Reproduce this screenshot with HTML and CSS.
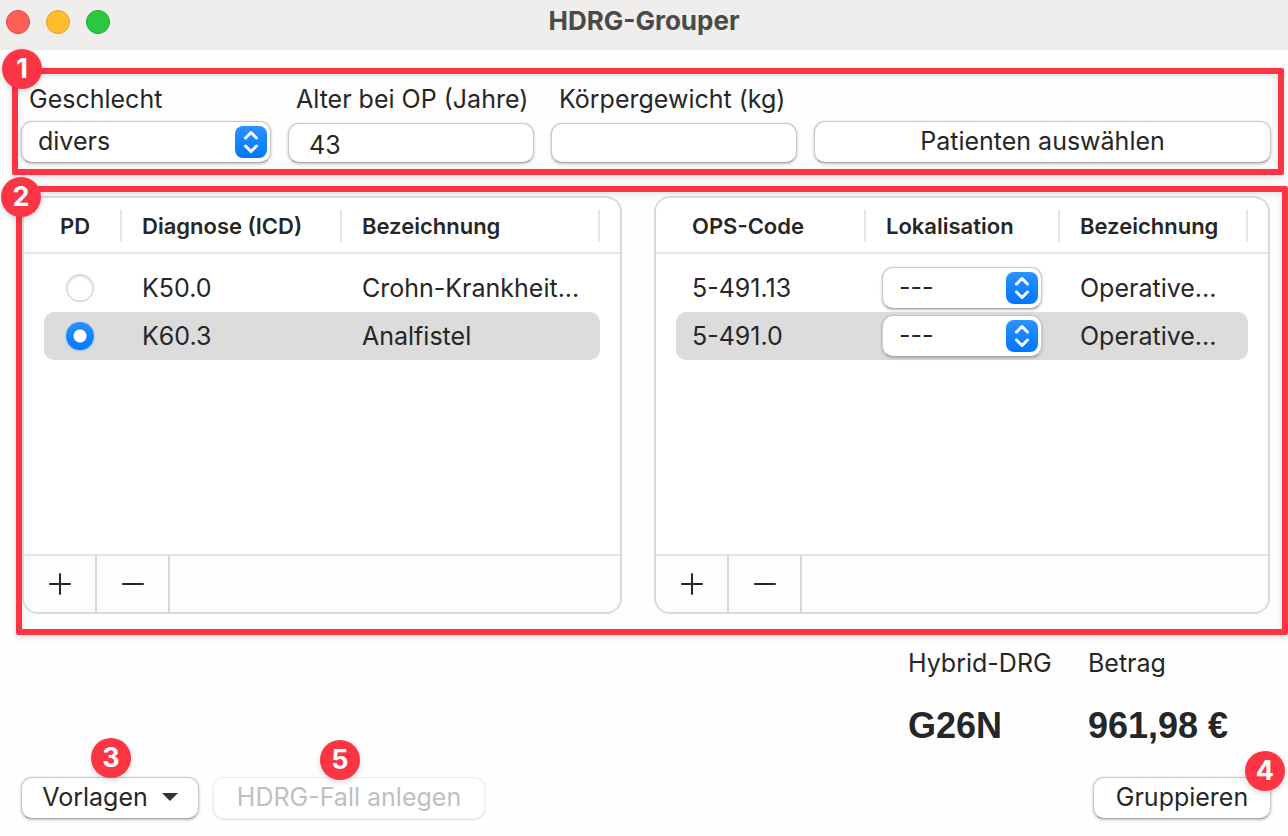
FILE: index.html
```html
<!DOCTYPE html>
<html lang="de">
<head>
    <meta charset="UTF-8">
    <meta name="viewport" content="width=device-width, initial-scale=1.0">
    <title>HDRG-Grouper</title>
    <link rel="stylesheet" href="styles.css">
</head>
<body>
    <svg class="symbols" aria-hidden="true">
        <defs>
            <linearGradient id="blue" x1="0" y1="0" x2="0" y2="1">
                <stop offset="0" stop-color="#2b91ff"/>
                <stop offset="1" stop-color="#0078ff"/>
            </linearGradient>
        </defs>
        <symbol id="updown" viewBox="0 0 32 32">
            <rect width="32" height="32" rx="8" fill="url(#blue)"/>
            <path d="M10.500 12 16 6.500 21.500 12M10.500 20 16 25.500 21.500 20" fill="none" stroke="#fff" stroke-width="3" stroke-linecap="round" stroke-linejoin="round"/>
        </symbol>
    </svg>

    <div class="window">
        <header class="titlebar">
            <div class="lights">
                <button class="light close" aria-label="Schließen"></button>
                <button class="light minimize" aria-label="Minimieren"></button>
                <button class="light maximize" aria-label="Maximieren"></button>
            </div>
            <h1>HDRG-Grouper</h1>
        </header>

        <section class="frame patient">
            <span class="badge on-corner">1</span>
            <div class="field">
                <label for="gender">Geschlecht</label>
                <div class="popup">
                    <select id="gender">
                        <option>divers</option>
                        <option>männlich</option>
                        <option>weiblich</option>
                    </select>
                    <svg class="arrows"><use href="#updown"/></svg>
                </div>
            </div>
            <div class="field">
                <label for="age">Alter bei OP (Jahre)</label>
                <input type="text" id="age" value="43">
            </div>
            <div class="field">
                <label for="weight">Körpergewicht (kg)</label>
                <input type="text" id="weight">
            </div>
            <button class="button">Patienten auswählen</button>
        </section>

        <section class="frame codes">
            <span class="badge below-corner">2</span>

            <div class="panel">
                <table class="diagnoses">
                    <thead>
                        <tr>
                            <th class="col-pd">PD</th>
                            <th class="col-icd">Diagnose (ICD)</th>
                            <th>Bezeichnung</th>
                        </tr>
                    </thead>
                    <tbody>
                        <tr>
                            <td><input type="radio" name="pd" aria-label="K50.0"></td>
                            <td>K50.0</td>
                            <td>Crohn-Krankheit...</td>
                        </tr>
                        <tr class="selected">
                            <td><input type="radio" name="pd" aria-label="K60.3" checked></td>
                            <td>K60.3</td>
                            <td>Analfistel</td>
                        </tr>
                    </tbody>
                </table>
                <div class="toolbar">
                    <button aria-label="Diagnose hinzufügen">
                        <svg width="22" height="22"><path d="M1 11H21M11 1V21"/></svg>
                    </button>
                    <button aria-label="Diagnose entfernen">
                        <svg width="22" height="22"><path d="M1 11H21"/></svg>
                    </button>
                </div>
            </div>

            <div class="panel">
                <table class="procedures">
                    <thead>
                        <tr>
                            <th class="col-ops">OPS-Code</th>
                            <th class="col-loc">Lokalisation</th>
                            <th>Bezeichnung</th>
                        </tr>
                    </thead>
                    <tbody>
                        <tr>
                            <td>5-491.13</td>
                            <td class="cell-popup">
                                <div class="popup">
                                    <select aria-label="Lokalisation 5-491.13"><option>---</option></select>
                                    <svg class="arrows"><use href="#updown"/></svg>
                                </div>
                            </td>
                            <td>Operative...</td>
                        </tr>
                        <tr class="selected">
                            <td>5-491.0</td>
                            <td class="cell-popup">
                                <div class="popup">
                                    <select aria-label="Lokalisation 5-491.0"><option>---</option></select>
                                    <svg class="arrows"><use href="#updown"/></svg>
                                </div>
                            </td>
                            <td>Operative...</td>
                        </tr>
                    </tbody>
                </table>
                <div class="toolbar">
                    <button aria-label="Prozedur hinzufügen">
                        <svg width="22" height="22"><path d="M1 11H21M11 1V21"/></svg>
                    </button>
                    <button aria-label="Prozedur entfernen">
                        <svg width="22" height="22"><path d="M1 11H21"/></svg>
                    </button>
                </div>
            </div>
        </section>

        <dl class="result">
            <div>
                <dt>Hybrid-DRG</dt>
                <dd>G26N</dd>
            </div>
            <div>
                <dt>Betrag</dt>
                <dd>961,98 €</dd>
            </div>
        </dl>

        <footer class="actions">
            <div class="action">
                <button class="button">
                    Vorlagen
                    <svg width="16" height="8"><path d="M0 0H16L8 8Z" fill="#333"/></svg>
                </button>
                <span class="badge above-left">3</span>
            </div>
            <div class="action wide">
                <button class="button" disabled>HDRG-Fall anlegen</button>
                <span class="badge above-middle">5</span>
            </div>
            <div class="action last">
                <button class="button">Gruppieren</button>
                <span class="badge above-right">4</span>
            </div>
        </footer>
    </div>
</body>
</html>
```
FILE: styles.css
```css
* {
    box-sizing: border-box;
}
body {
    margin: 0;
    font-family: Inter, "Liberation Sans", sans-serif;
    font-size: 25px;
    line-height: 32px;
    color: #262626;
    background-color: #fefefe;
}
button, input, select {
    font: inherit;
    color: inherit;
    margin: 0;
}
.symbols {
    position: absolute;
    width: 0;
    height: 0;
}
.window {
    display: flex;
    flex-direction: column;
    min-height: 100vh;
}

/* title bar */
.titlebar {
    display: grid;
    grid-template-columns: 1fr auto 1fr;
    height: 50px;
    padding: 0 6px 6px;
    align-items: center;
    background-color: #efeeec;
}
.lights {
    display: flex;
    gap: 16px;
}
.light {
    width: 24px;
    height: 24px;
    padding: 0;
    border: 1px solid;
    border-radius: 50%;
}
.close {
    background-color: #ff5f57;
    border-color: #e1483f;
}
.minimize {
    background-color: #febc2e;
    border-color: #dea123;
}
.maximize {
    background-color: #28c840;
    border-color: #1aab29;
}
h1 {
    margin: 0;
    padding-bottom: 2px;
    font-size: 26px;
    font-weight: 700;
    color: #4a4a4a;
}

/* red numbered markers */
.frame {
    position: relative;
    border: 6px solid #fb3544;
    border-radius: 2px;
    box-shadow: 0 2px 6px rgba(0, 0, 0, 0.15), inset 0 2px 6px rgba(0, 0, 0, 0.12);
}
.badge {
    position: absolute;
    width: 40px;
    height: 40px;
    border-radius: 50%;
    background-color: #fb3544;
    box-shadow: 0 2px 6px rgba(0, 0, 0, 0.15);
    color: #fff;
    font-size: 27px;
    font-weight: 700;
    line-height: 40px;
    text-align: center;
}
.on-corner {
    top: -25px;
    left: -16px;
}
.below-corner {
    top: -15px;
    left: -21px;
}
.above-left {
    top: -39px;
    left: 70px;
}
.above-middle {
    top: -37px;
    left: 107px;
}
.above-right {
    top: -26px;
    right: -14px;
}

/* controls */
.button, .popup select, .field input {
    width: 100%;
    height: 42px;
    border: 1px solid #c8c8c8;
    border-bottom-color: #a8a8a8;
    border-radius: 11px;
    background-color: #fff;
    box-shadow: 0 1px 3px rgba(0, 0, 0, 0.25);
}
.button {
    display: flex;
    align-items: center;
    justify-content: center;
    gap: 14px;
    padding: 0 0 2px;
}
.button:disabled {
    color: #bfbfbf;
    border-color: #eee;
    box-shadow: 0 1px 2px rgba(0, 0, 0, 0.12);
}
.field input {
    display: block;
    height: 40px;
    margin-top: 8px;
    padding: 4px 20px 0;
}
.popup {
    display: grid;
    align-items: center;
}
.popup > * {
    grid-area: 1 / 1;
}
.popup select {
    appearance: none;
    padding: 0 40px 2px 16px;
}
.arrows {
    width: 32px;
    height: 32px;
    margin-right: 4px;
    justify-self: end;
    pointer-events: none;
}

.patient {
    display: grid;
    grid-template-columns: 250px 246px 246px 1fr;
    gap: 17px;
    align-items: end;
    margin: 18px 4px 0 12px;
    padding: 9px 7px 6px 3px;
}
.field label {
    display: block;
    padding: 0 8px;
    white-space: nowrap;
}
.field .popup {
    margin-top: 6px;
}

/* tables */
.codes {
    display: grid;
    grid-template-columns: 600fr 616fr;
    gap: 32px;
    flex: 1;
    margin: 11px 0 0 16px;
    padding: 4px 12px 15px 0;
}
.panel {
    display: flex;
    flex-direction: column;
    justify-content: space-between;
    border: 2px solid #d9d9d9;
    border-radius: 16px;
    background-color: #fff;
    overflow: hidden;
}
table {
    width: 100%;
    padding: 0 20px;
    table-layout: fixed;
    border-spacing: 0;
    background: linear-gradient(#e4e4e4, #e4e4e4) 0 54px / 100% 2px no-repeat;
}
th, td {
    padding: 0 0 0 20px;
    text-align: left;
    white-space: nowrap;
}
th {
    height: 66px;
    padding-bottom: 10px;
    font-size: 22px;
    font-weight: 600;
    background: linear-gradient(#e4e4e4, #e4e4e4) right 12px / 2px 32px no-repeat;
}
td {
    height: 48px;
}
th:first-child, td:first-child {
    padding-left: 16px;
}
.col-pd {
    width: 78px;
}
.col-icd {
    width: 220px;
}
.col-ops {
    width: 190px;
}
.col-loc {
    width: 194px;
}
.cell-popup {
    padding: 0 18px 0 16px;
}
.selected td {
    background-color: #dcdcdc;
}
.selected td:first-child {
    border-radius: 10px 0 0 10px;
}
.selected td:last-child {
    border-radius: 0 10px 10px 0;
}
input[type="radio"] {
    display: block;
    appearance: none;
    width: 28px;
    height: 28px;
    margin-left: 6px;
    border: 1px solid #c4c4c4;
    border-radius: 50%;
    background-color: #fff;
    box-shadow: inset 0 2px 3px rgba(0, 0, 0, 0.12);
}
input[type="radio"]:checked {
    border: none;
    background: radial-gradient(circle, #fff 6px, transparent 7px), linear-gradient(#2b91ff, #0078ff);
    box-shadow: 0 1px 2px rgba(0, 120, 255, 0.3);
}
.toolbar {
    display: flex;
    height: 58px;
    border-top: 2px solid #e4e4e4;
    background-color: #fdfdfd;
}
.toolbar button {
    display: grid;
    place-items: center;
    width: 73px;
    padding: 0;
    border: none;
    border-right: 2px solid #d9d9d9;
    background: none;
}
.toolbar path {
    stroke: #262626;
    stroke-width: 2;
    stroke-linecap: round;
}

/* result */
.result {
    display: flex;
    justify-content: flex-end;
    margin: 12px 20px 29px;
}
.result div {
    width: 180px;
}
.result dt {
    margin-bottom: 25px;
}
.result dd {
    margin: 0;
    font-family: "Liberation Sans", sans-serif;
    font-size: 36px;
    font-weight: 700;
    line-height: 44px;
}
.actions {
    display: flex;
    gap: 14px;
    padding: 0 17px 17px 21px;
}
.action {
    position: relative;
    width: 178px;
}
.wide {
    width: 272px;
}
.last {
    margin-left: auto;
}
```
